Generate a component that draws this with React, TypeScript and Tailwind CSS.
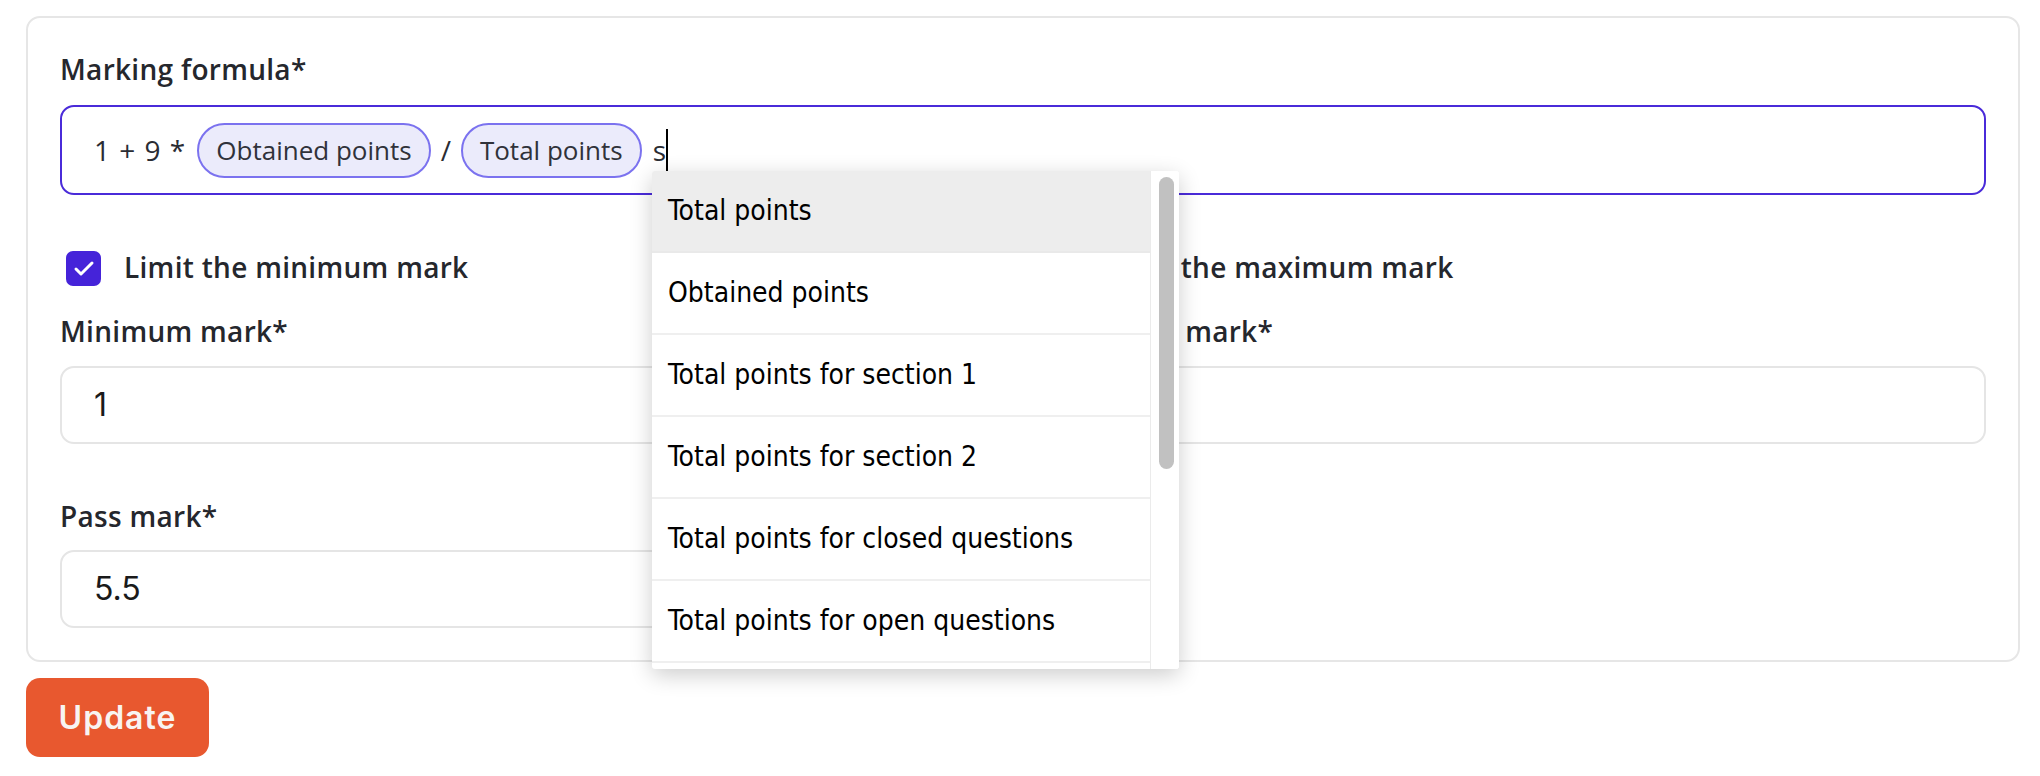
import { Check } from "lucide-react";

const options = [
  "Total points",
  "Obtained points",
  "Total points for section 1",
  "Total points for section 2",
  "Total points for closed questions",
  "Total points for open questions",
];

const Chip = ({ label }: { label: string }) => (
  <span className="flex h-[55px] items-center rounded-full border-2 border-[#7b72ef] bg-[#ebebfb] px-[17px] text-[#30323a]">
    {label}
  </span>
);

const FieldLabel = ({ children }: { children: string }) => (
  <p className="text-[28px] font-semibold leading-[42px] tracking-[0.3px] text-[#25272d]">
    {children}
  </p>
);

const TextInput = ({ value }: { value: string }) => (
  <div className="mt-[14px] flex h-[78px] items-center rounded-[14px] border-2 border-[#e5e5e5] px-8 font-['Inter',sans-serif] text-[32px] text-[#1a1a1a]">
    {value}
  </div>
);

const CheckRow = ({ label, checked }: { label: string; checked: boolean }) => (
  <div className="flex h-[35px] items-center">
    <span
      className={
        checked
          ? "ml-[6px] flex h-[35px] w-[35px] shrink-0 items-center justify-center rounded-[7px] bg-[#4523d9]"
          : "ml-[6px] flex h-[35px] w-[35px] shrink-0 items-center justify-center rounded-[7px] border-2 border-[#c9c9d2] bg-white"
      }
    >
      {checked && <Check className="h-6 w-6 text-white" strokeWidth={3} />}
    </span>
    <span className="-mt-1 ml-[23px] text-[28px] font-semibold tracking-[0.3px] text-[#25272d]">
      {label}
    </span>
  </div>
);

const SuggestionList = () => (
  <div className="absolute left-[590px] top-[64px] z-10 flex h-[498px] w-[527px] overflow-hidden rounded-[3px] bg-white shadow-[0_6px_22px_rgba(0,0,0,0.2)]">
    <ul className="w-[498px] [font-family:'DejaVu_Sans_Condensed','DejaVu_Sans','Liberation_Sans',sans-serif] text-[28px] text-black">
      {options.map((option, i) => (
        <li
          key={option}
          className={
            i === 0
              ? "flex h-[82px] items-center border-b-2 border-[#e9e9e9] bg-[#ededed] pl-4"
              : "flex h-[82px] items-center border-b-2 border-[#efefef] pl-4"
          }
        >
          {option}
        </li>
      ))}
    </ul>
    <div className="w-[29px] border-l border-[#ebebeb] bg-white pl-2 pt-[6px]">
      <div className="h-[292px] w-[15px] rounded-full bg-[#c1c1c1]" />
    </div>
  </div>
);

export default function App() {
  return (
    <div className="min-h-screen bg-white pl-[26px] pr-[20px] pt-4 font-['Open_Sans',sans-serif]">
      <div className="rounded-[14px] border-2 border-[#e6e6e6] px-8 pb-8 pt-[30px]">
        <FieldLabel>Marking formula*</FieldLabel>
        <div className="relative mt-[15px] flex h-[90px] items-center rounded-[14px] border-2 border-[#4a2bd9] px-8 text-[26px] text-[#2a2c33]">
          <span className="mr-3 text-[28px] [word-spacing:2px]">1 + 9 *</span>
          <Chip label="Obtained points" />
          <span className="mx-[10px] text-[28px]">/</span>
          <Chip label="Total points" />
          <span className="ml-[11px] text-[28px]">s</span>
          <span className="h-[42px] w-[2px] bg-black" />
          <SuggestionList />
        </div>

        <div className="mt-[56px] grid grid-cols-2 gap-x-8">
          <CheckRow label="Limit the minimum mark" checked />
          <CheckRow label="Limit the maximum mark" checked />
          <div className="mt-6">
            <FieldLabel>Minimum mark*</FieldLabel>
            <TextInput value="1" />
          </div>
          <div className="mt-6">
            <FieldLabel>Maximum mark*</FieldLabel>
            <TextInput value="10" />
          </div>
          <div className="mt-[51px]">
            <FieldLabel>Pass mark*</FieldLabel>
            <div className="mt-[13px] flex h-[78px] items-center rounded-[14px] border-2 border-[#e5e5e5] px-8 font-['Inter',sans-serif] text-[32px] text-[#1a1a1a]">
              5.5
            </div>
          </div>
        </div>
      </div>

      <button className="mt-4 h-[79px] w-[183px] rounded-[14px] bg-[#e8582f] font-['Inter',sans-serif] text-[32px] font-semibold tracking-[1px] text-[#f8f4f2]">
        Update
      </button>
    </div>
  );
}
